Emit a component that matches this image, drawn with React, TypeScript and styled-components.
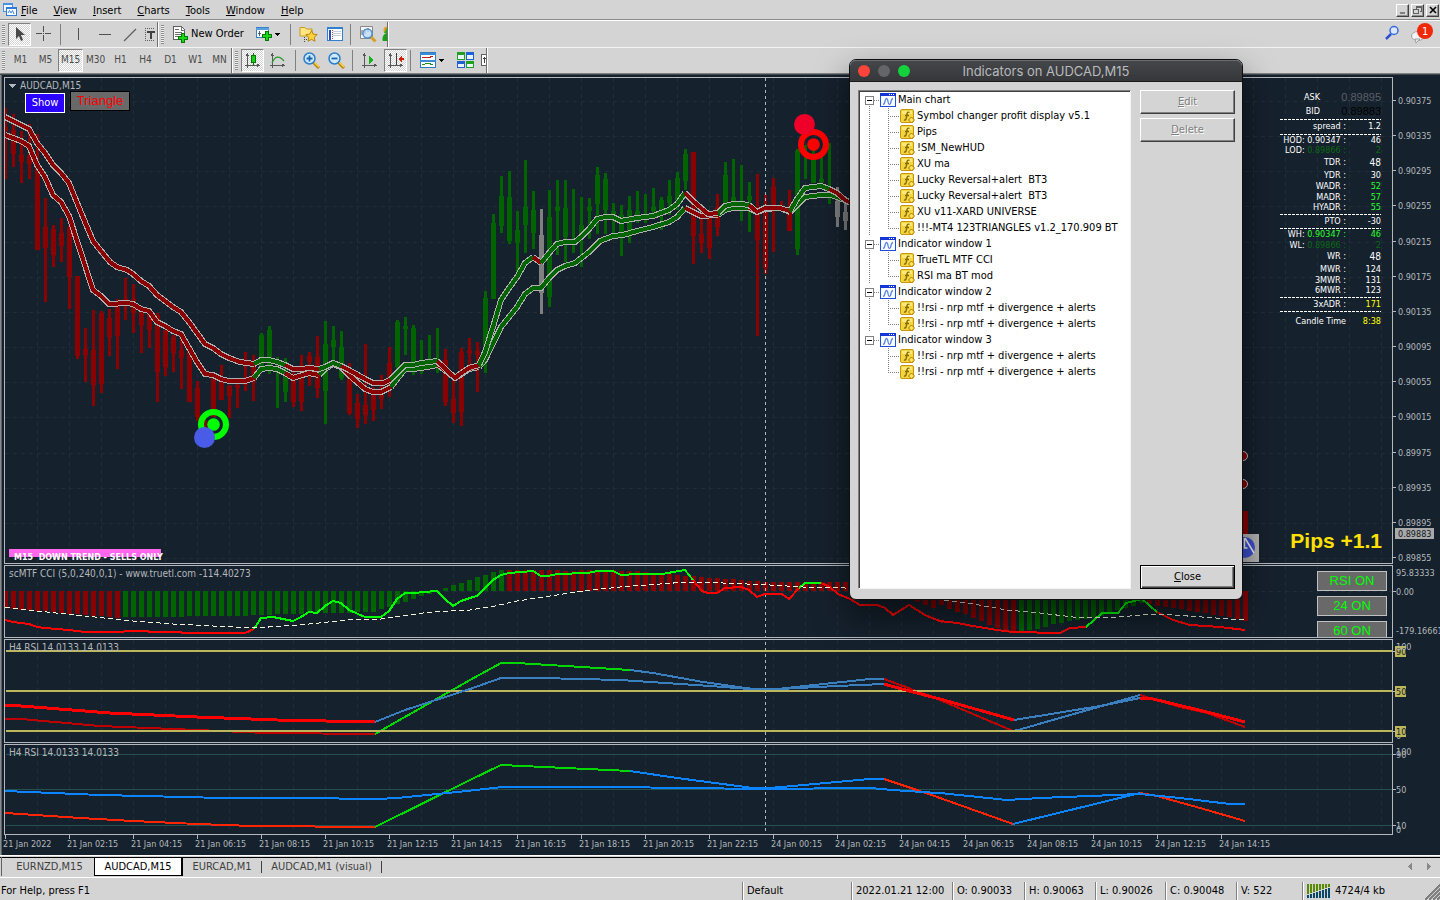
import React from 'react';
import styled, { createGlobalStyle, css } from 'styled-components';

const UI = '"DejaVu Sans Condensed", "DejaVu Sans", sans-serif';
const ARIAL = '"Liberation Sans", Arial, sans-serif';
const FACE = '#d4d4d4';
const INK = '#15212d';
const FRAME = '#b4b8bc';
const RED = '#8b0000';
const GREEN = '#006400';
const GREY = '#808080';
const LIME = '#00ff00';

const GlobalStyle = createGlobalStyle`
  *, *::before, *::after { box-sizing: border-box; }
  body { margin: 0; background: ${FACE}; font: 11px/14px ${UI}; color: #000; }
  button { font: inherit; color: inherit; padding: 0; margin: 0; border: 0; background: none; }
  svg { display: block; flex: none; }
`;

/* ---------- chart data ---------- */

type Pt = [number, number];
type Block = [number, number, Pt[]];
type Run = { color: string; width?: number; blocks: Block[] };

/* Points are stored in thirds of a pixel from the block's origin. */
const place = (blocks: Block[]) =>
  blocks
    .map(([ox, oy, pts]) => pts.map(([x, y]) => `${Math.round(ox + x / 3)},${Math.round(oy + y / 3)}`).join(' '))
    .join(' ');

type Candle = [string, number, number, number?, number?];

const candles: Candle[] = [
  ['r', 24, 236, 82, 92], ['r', 42, 200, 90, 162], ['r', 94, 248, 166, 186], ['r', 72, 237, 166, 192], ['r', 102, 450, 200, 450],
  ['r', 294, 605, 381, 443], ['r', 375, 500, 387, 465], ['r', 354, 486, 398, 438], ['r', 375, 627, 385, 532], ['r', 528, 777, 528, 768],
  ['r', 684, 846, 747, 766], ['r', 630, 917, 751, 855], ['r', 633, 879, 639, 851], ['r', 627, 768, 655, 711], ['r', 598, 807, 602, 708],
  ['r', 534, 660, 598, 612], ['r', 551, 699, 598, 640], ['r', 620, 759, 630, 675], ['r', 630, 744, 630, 689], ['r', 640, 906, 645, 817],
  ['r', 690, 828, 690, 800], ['r', 705, 816, 711, 760], ['r', 700, 867, 751, 773], ['r', 750, 906, 750, 906], ['r', 843, 964, 865, 950],
  ['r', 960, 1000], ['r', 825, 950, 835, 950], ['r', 795, 900, 835, 900], ['r', 855, 953, 858, 887], ['r', 850, 923, 855, 865],
  ['r', 756, 873, 840, 855], ['r', 765, 903, 795, 845], ['g', 699, 800, 705, 800], ['g', 678, 822, 689, 800], ['g', 771, 924],
  ['g', 774, 906, 785, 875], ['r', 800, 921, 840, 907], ['r', 765, 934, 795, 905], ['r', 756, 858, 768, 787], ['r', 708, 894, 771, 865],
  ['g', 663, 972, 732, 873], ['g', 678, 802, 720, 740], ['g', 693, 840, 740, 835], ['r', 790, 945, 810, 940], ['r', 882, 983, 910, 958],
  ['r', 732, 971, 915, 945], ['r', 860, 963, 883, 930], ['r', 825, 927, 860, 898], ['r', 741, 891, 790, 860], ['g', 660, 807, 666, 802],
  ['g', 651, 765, 678, 688], ['g', 675, 825, 684, 815], ['g', 720, 822], ['g', 705, 800], ['g', 684, 819],
  ['r', 747, 917, 780, 905], ['r', 820, 969, 897, 940], ['r', 744, 977, 755, 935], ['r', 714, 800, 750, 755], ['r', 726, 876, 753, 765],
  ['g', 573, 819, 594, 760], ['g', 342, 597, 370, 597], ['g', 228, 399, 288, 378], ['g', 213, 432, 290, 423], ['g', 333, 517, 390, 428],
  ['g', 180, 459, 321, 375], ['g', 273, 447, 330, 400], ['x', 327, 642, 405, 580], ['g', 270, 621, 350, 590], ['g', 240, 465, 321, 333],
  ['g', 240, 486, 325, 412], ['g', 267, 459], ['g', 291, 501, 375, 410], ['g', 294, 417, 321, 333], ['g', 201, 402, 225, 312],
  ['g', 219, 402, 237, 330], ['g', 309, 400, 333, 345], ['g', 315, 468, 345, 408], ['g', 288, 429, 330, 400], ['g', 273, 370, 333, 350],
  ['g', 282, 370], ['g', 264, 345, 321, 333], ['g', 291, 390, 300, 345], ['g', 240, 345, 288, 310], ['g', 216, 330, 234, 300],
  ['g', 147, 270, 162, 243], ['r', 156, 492, 156, 408], ['r', 330, 459, 402, 430], ['r', 345, 477, 350, 444], ['r', 282, 408, 321, 380],
  ['g', 186, 310, 225, 310], ['g', 177, 310, 290, 310], ['g', 195, 363], ['g', 246, 396, 288, 300], ['r', 222, 708, 330, 420],
  ['r', 285, 521, 315, 505], ['r', 234, 456, 262, 315], ['r', 303, 320], ['r', 270, 393, 318, 393], ['g', 147, 465, 153, 447],
  ['g', 135, 237], ['g', 150, 250, 170, 250], ['g', 165, 250, 236, 250], ['g', 129, 312], ['x', 261, 381, 303, 350], ['x', 300, 390, 336, 363],
];
const tone: Record<string, string> = { r: RED, g: GREEN, x: GREY };

const upperMA: Run[] = [
  { color: RED, blocks: [[0, 100, [[16, 50], [88, 88], [112, 130], [136, 160], [160, 195], [184, 218], [208, 250], [240, 330], [280, 423], [330, 485], [352, 500], [380, 510], [400, 522], [424, 543], [448, 558], [472, 585], [496, 602], [520, 622], [544, 637], [568, 665], [592, 700], [616, 732], [640, 743], [664, 762], [688, 773], [720, 785], [763, 791]]]] },
  { color: GREEN, blocks: [[0, 100, [[763, 791], [784, 780], [808, 780], [832, 786], [856, 795]]]] },
  { color: RED, blocks: [[0, 100, [[856, 795], [880, 807], [904, 807], [928, 803], [956, 808]]]] },
  { color: GREEN, blocks: [[0, 100, [[956, 808], [976, 800], [1000, 790], [1024, 797]]]] },
  { color: RED, blocks: [[0, 100, [[1024, 797], [1048, 810], [1096, 837], [1120, 848], [1150, 848], [1170, 840]]]] },
  { color: GREEN, blocks: [[0, 100, [[1170, 840], [1192, 820], [1216, 796], [1240, 795], [1264, 789], [1312, 782]]]] },
  { color: RED, blocks: [[0, 100, [[1312, 782], [1365, 833]]], [440, 100, [[60, 822], [88, 803], [117, 796]]]] },
  { color: GREEN, blocks: [[440, 100, [[117, 796], [136, 755], [160, 680], [184, 600], [208, 565], [232, 532], [256, 490], [280, 470]]]] },
  { color: RED, blocks: [[440, 100, [[280, 470], [304, 490]]]] },
  { color: GREEN, blocks: [[440, 100, [[304, 490], [328, 460], [352, 432], [376, 427], [404, 425], [424, 410], [448, 387], [472, 357], [496, 350], [520, 350], [544, 362], [592, 355], [640, 347], [688, 330], [712, 313], [736, 278]]]] },
  { color: RED, blocks: [[440, 100, [[736, 278], [760, 302], [784, 325], [804, 341], [834, 340]]]] },
  { color: GREEN, blocks: [[440, 100, [[834, 340], [856, 318], [880, 311], [904, 311], [928, 315]]]] },
  { color: RED, blocks: [[440, 100, [[928, 315], [952, 335], [976, 325], [1020, 323], [1050, 333]]]] },
  { color: GREEN, blocks: [[440, 100, [[1050, 333], [1072, 298], [1096, 263], [1144, 259], [1168, 266]]]] },
  { color: RED, blocks: [[440, 100, [[1168, 266], [1192, 280], [1216, 300], [1250, 318]]]] },
];
const lowerMA: Run[] = [
  { color: RED, blocks: [[0, 100, [[16, 105], [64, 124], [88, 138], [112, 195], [136, 232], [160, 285], [184, 306], [208, 348], [240, 450], [280, 570], [304, 588], [328, 611], [380, 608], [400, 613], [424, 628], [448, 632], [472, 665], [496, 678], [520, 692], [544, 703], [568, 745], [592, 787], [614, 822], [640, 826], [664, 838], [688, 843], [736, 843], [763, 835]]]] },
  { color: GREEN, blocks: [[0, 100, [[763, 835], [784, 808], [808, 804], [832, 808], [856, 820]]]] },
  { color: RED, blocks: [[0, 100, [[856, 820], [880, 835], [928, 818], [956, 824]]]] },
  { color: GREEN, blocks: [[0, 100, [[956, 824], [976, 808], [1000, 792], [1024, 800]]]] },
  { color: RED, blocks: [[0, 100, [[1024, 800], [1048, 825], [1096, 866], [1120, 875], [1144, 875], [1172, 860]]]] },
  { color: GREEN, blocks: [[0, 100, [[1172, 860], [1192, 838], [1216, 808], [1240, 806], [1280, 800], [1312, 796]]]] },
  { color: RED, blocks: [[0, 100, [[1312, 792], [1365, 835]]], [440, 100, [[60, 824], [88, 806], [117, 800]]]] },
  { color: GREEN, blocks: [[440, 100, [[117, 800], [136, 780], [184, 680], [232, 620], [256, 583], [280, 563], [304, 563], [328, 535], [352, 510], [376, 498], [404, 488], [448, 455], [480, 422], [520, 408], [548, 406], [592, 392], [640, 380], [688, 365], [712, 350], [736, 325]]]] },
  { color: RED, blocks: [[440, 100, [[736, 325], [784, 347], [834, 346]]]] },
  { color: GREEN, blocks: [[440, 100, [[834, 346], [856, 330], [880, 324], [928, 325]]]] },
  { color: RED, blocks: [[440, 100, [[928, 325], [952, 337], [976, 327], [1020, 325], [1050, 335]]]] },
  { color: GREEN, blocks: [[440, 100, [[1050, 335], [1096, 292], [1144, 284], [1172, 284], [1216, 300], [1250, 318]]]] },
];

/* CCI histogram: window y of each bar's far end, by bar index. */
const cciBars: { i: number; y: number; up: boolean }[] = [];
const addBars = (from: number, up: boolean, ys: number[]) => ys.forEach((y, k) => cciBars.push({ i: from + k, y, up }));
addBars(0, false, [608, 609, 610, 610, 611, 611, 612, 613, 614, 614, 615, 616, 616, 617, 618]);
addBars(15, true, [617, 617, 617, 617, 617, 617, 617, 617, 616, 616, 616, 616, 616, 616, 616, 616, 615, 615, 615, 614, 614, 614, 614, 613, 613, 613, 613, 613, 613, 612, 612, 612, 609, 607, 604, 602, 599, 596, 594, 592, 588, 585, 583, 580, 577, 575, 572, 570]);
addBars(63, false, [570, 570, 570, 570, 570, 570, 570, 571, 571, 570, 570, 570, 570, 570, 571, 571, 571, 572, 573, 573, 574, 575, 576, 576, 577, 578, 578, 579, 579, 580, 581, 581, 582, 582, 582, 582, 582, 582, 582, 582, 582, 582, 582, 582]);
addBars(114, false, [602, 605, 608, 605, 609, 612, 614, 618, 621, 625, 628, 630, 633]);
addBars(127, true, [632, 630, 629, 627, 624, 623, 621, 620, 619, 618, 616, 613, 610, 608, 606, 603]);
addBars(143, false, [604, 606, 607, 608, 609, 611, 612, 613, 615, 616, 617, 619, 621]);

const cciLine: Run[] = [
  { color: '#ff0000', blocks: [[0, 530, [[16, 270], [40, 275], [88, 282], [112, 290], [136, 293], [208, 300], [256, 306], [370, 306], [376, 302], [440, 302], [450, 306], [540, 306], [548, 309], [736, 309], [762, 298]]]] },
  { color: LIME, blocks: [[0, 530, [[762, 298], [784, 265], [820, 261], [880, 272], [904, 262], [928, 247], [952, 250], [976, 228], [1000, 213], [1024, 220], [1048, 240], [1096, 261], [1144, 261], [1168, 243], [1192, 207], [1216, 190], [1245, 190], [1270, 186], [1312, 184], [1336, 208], [1360, 228], [1384, 214], [1420, 202]]], [470, 560, [[20, 108], [45, 83], [69, 60], [93, 46], [118, 39], [190, 33], [212, 47], [235, 47], [260, 43], [350, 39], [385, 33], [430, 33], [452, 45], [500, 42], [575, 42], [645, 31], [668, 60]]]] },
  { color: '#ff0000', blocks: [[470, 560, [[668, 60], [695, 92], [715, 99], [740, 99], [766, 85], [813, 81], [838, 90], [862, 111], [886, 102], [935, 102], [958, 118], [987, 85]]]] },
  { color: LIME, blocks: [[470, 560, [[987, 85], [1005, 69], [1052, 69]]]] },
  { color: '#ff0000', blocks: [[470, 560, [[1052, 69], [1080, 80], [1105, 102], [1140, 118], [1170, 134], [1222, 135], [1245, 145], [1270, 166], [1317, 135], [1365, 165], [1415, 186]]], [940, 440, [[0, 543], [50, 550], [100, 558], [170, 570], [220, 576], [360, 579], [390, 563], [438, 560]]]] },
  { color: LIME, blocks: [[940, 440, [[438, 560], [485, 519], [535, 518], [557, 490], [605, 478], [650, 517]]]] },
  { color: '#ff0000', blocks: [[940, 440, [[650, 517], [700, 540], [750, 555], [840, 561], [916, 570]]]] },
];
const cciSignal: Block[] = [
  [0, 530, [[16, 232], [112, 242], [256, 259], [400, 272], [520, 281], [640, 288], [760, 293], [900, 286], [1040, 270], [1144, 268], [1270, 250], [1300, 246], [1400, 239]]],
  [470, 560, [[0, 149], [75, 138], [140, 123], [240, 107], [340, 93], [450, 80], [530, 74], [650, 65], [760, 70], [900, 76], [1000, 81], [1100, 82]]],
  [940, 440, [[30, 483], [100, 493], [200, 510], [300, 520], [400, 532], [500, 534], [640, 523], [700, 525], [916, 539]]],
];

const STEEL = '#3a80c0';
const DEEP = '#c00000';
const LEAF = '#00d800';
const rsiOneThin: Run[] = [
  { color: DEEP, blocks: [[0, 530, [[16, 566], [64, 567], [300, 588], [592, 600], [800, 608], [1124, 611]]]] },
  { color: LEAF, blocks: [[0, 530, [[1124, 611], [1410, 451]]], [470, 560, [[93, 309], [140, 309], [480, 330]]]] },
  { color: STEEL, blocks: [[470, 560, [[480, 330], [550, 340], [700, 365], [850, 386], [920, 386], [1200, 356], [1243, 356]]]] },
  { color: DEEP, blocks: [[470, 560, [[1243, 356], [1300, 378]]], [940, 440, [[0, 780], [220, 872]]]] },
  { color: STEEL, blocks: [[940, 440, [[220, 872], [235, 870], [600, 764]]]] },
  { color: DEEP, blocks: [[940, 440, [[600, 764], [720, 800], [800, 820], [916, 861]]]] },
];
const rsiOneThick: Run[] = [
  { color: '#ff0000', width: 3, blocks: [[0, 530, [[16, 525], [64, 528], [330, 550], [592, 561], [830, 571], [1124, 575]]]] },
  { color: STEEL, blocks: [[0, 530, [[1124, 575], [1216, 540], [1410, 478]]], [470, 560, [[93, 353], [210, 354], [450, 360], [720, 377], [840, 387], [930, 387], [1100, 378], [1243, 372]]]] },
  { color: '#ff0000', width: 3, blocks: [[470, 560, [[1243, 372], [1330, 397]]], [940, 440, [[0, 777], [222, 840]]]] },
  { color: STEEL, blocks: [[940, 440, [[222, 840], [480, 797], [600, 775]]]] },
  { color: '#ff0000', width: 3, blocks: [[940, 440, [[600, 775], [640, 778], [800, 815], [916, 847]]]] },
];
const AZURE = '#0a84ff';
const FLAME = '#ff2400';
const rsiTwo: Run[] = [
  { color: FLAME, blocks: [[0, 530, [[16, 848], [240, 863], [400, 874], [592, 883], [760, 888], [1124, 891]]]] },
  { color: LEAF, blocks: [[0, 530, [[1124, 891], [1410, 750]]], [470, 560, [[93, 615], [480, 633]]]] },
  { color: AZURE, blocks: [[470, 560, [[480, 633], [620, 655], [850, 684], [900, 684], [1200, 657], [1243, 656]]]] },
  { color: FLAME, blocks: [[470, 560, [[1243, 656], [1340, 690]]], [940, 440, [[0, 1075], [218, 1153]]]] },
  { color: AZURE, blocks: [[940, 440, [[218, 1153], [600, 1058]]]] },
  { color: FLAME, blocks: [[940, 440, [[600, 1058], [650, 1068], [780, 1103], [916, 1143]]]] },
  { color: AZURE, blocks: [[0, 530, [[16, 783], [160, 788], [300, 794], [430, 797], [670, 803], [900, 805], [1130, 806], [1190, 803], [1310, 792], [1400, 782]]], [470, 560, [[95, 681], [430, 681], [650, 685], [870, 686], [1200, 683], [1270, 689], [1400, 700]]], [940, 440, [[0, 1060], [200, 1079], [300, 1074], [600, 1062], [720, 1073], [870, 1091], [916, 1092]]]] },
];

const prices = ['0.90375', '0.90335', '0.90295', '0.90255', '0.90215', '0.90175', '0.90135', '0.90095', '0.90055', '0.90015', '0.89975', '0.89935', '0.89895', '0.89855'];
const priceY = (n: number) => Math.round(23 + n * 35.15);
const times = ['21 Jan 2022', '21 Jan 02:15', '21 Jan 04:15', '21 Jan 06:15', '21 Jan 08:15', '21 Jan 10:15', '21 Jan 12:15', '21 Jan 14:15', '21 Jan 16:15', '21 Jan 18:15', '21 Jan 20:15', '21 Jan 22:15', '24 Jan 00:15', '24 Jan 02:15', '24 Jan 04:15', '24 Jan 06:15', '24 Jan 08:15', '24 Jan 10:15', '24 Jan 12:15', '24 Jan 14:15'];

/* ---------- page frame ---------- */

const Page = styled.div`
  display: flex; flex-direction: column; min-height: 100vh; position: relative; background: ${FACE}; overflow: hidden;
`;
const MenuBar = styled.nav`
  display: flex; align-items: center; height: 21px; padding: 1px 1px 1px 2px; border-bottom: 1px solid #fff; box-shadow: inset 0 -1px #8a8a8a;
`;
const MenuItem = styled.button`
  padding: 2px 8px 0; height: 18px;
  &:first-of-type { padding-left: 4px; }
`;
const Spacer = styled.div` flex: 1; `;
const Caption = styled.button`
  width: 13px; height: 13px; margin-left: 2px; display: grid; place-items: center; background: ${FACE};
  border: 1px solid; border-color: #fff #404040 #404040 #fff; box-shadow: inset -1px -1px #909090;
`;
const ToolRow = styled.div<{ $last?: boolean }>`
  display: flex; align-items: stretch; height: ${(p) => (p.$last ? 26 : 27)}px; padding-top: ${(p) => (p.$last ? 0 : 1)}px;
  border-bottom: 1px solid ${(p) => (p.$last ? '#808080' : '#f4f4f4')};
`;
const Band = styled.div`
  display: flex; align-items: center; padding-left: 2px; padding-bottom: 1px; border-right: 1px solid #707070; box-shadow: 1px 0 #fff; margin-right: 1px; overflow: hidden;
`;
const Grip = styled.i`
  width: 3px; height: 19px; margin-right: 3px; flex: none;
  background: repeating-linear-gradient(#8c8c8c 0 1px, #f0f0f0 1px 2px);
`;
const Tool = styled.button<{ $w?: number; $on?: boolean }>`
  flex: none; width: ${(p) => p.$w ?? 25}px; height: 23px; display: flex; align-items: center; justify-content: center; gap: 2px; white-space: nowrap;
  ${(p) => p.$on && css`
    background: repeating-conic-gradient(#fff 0 25%, ${FACE} 0 50%) 0 0 / 2px 2px;
    border: 1px solid; border-color: #808080 #fff #fff #808080;
  `}
`;
const Period = styled(Tool)` color: #4a4a4a; font-size: 10px; `;
const Rule = styled.i`
  width: 1px; height: 21px; margin: 0 3px; background: #808080; flex: none;
`;
const Alerts = styled.div` display: flex; gap: 10px; align-items: center; padding: 0 6px 3px 0; `;

const Workspace = styled.main`
  flex: 1; display: grid; grid-template-columns: minmax(0, 1fr) 47px; grid-template-rows: minmax(487px, 1fr) 73px 104px 91px 19px;
  row-gap: 1px; padding: 2px 0 0 4px; background: ${INK}; border-top: 1px solid #40474e;
  box-shadow: inset 1px 0 #8a8a8a, inset 2px 0 #5a6068;
`;
const Pane = styled.section`
  position: relative; overflow: hidden; border: 1px solid ${FRAME}; min-width: 0;
`;
const Plot = styled.svg` width: 100%; height: 100%; `;
const Scale = styled.svg` width: 47px; height: 100%; overflow: hidden; `;
const PaneTitle = styled.div`
  position: absolute; left: 4px; top: 2px; color: ${FRAME}; font-size: 10px; line-height: 12px; display: flex; align-items: center; gap: 3px;
`;
const TimeAxis = styled.div`
  grid-column: 1 / -1; display: flex; overflow: hidden; color: ${FRAME}; font-size: 9px; line-height: 19px; white-space: nowrap;
  margin-top: -1px; margin-left: -1px;
`;
const TimeCell = styled.span`
  flex: none; width: 64px; background: linear-gradient(${FRAME}, ${FRAME}) 2px 0 / 1px 4px no-repeat;
`;
const ChartButtons = styled.div` position: absolute; left: 20px; top: 13px; display: flex; gap: 5px; align-items: flex-start; `;
const ChartButton = styled.button<{ $kind: 'show' | 'triangle' | 'toggle' }>`
  height: 20px; display: grid; place-items: center;
  ${(p) => p.$kind === 'show' && css`width: 40px; margin-top: 2px; height: 20px; background: #2a00ff; border: 1px solid #fff; color: #fff;`}
  ${(p) => p.$kind === 'triangle' && css`width: 60px; background: #696969; border: 1px solid #000; color: #f00; font: 13px/18px ${ARIAL};`}
  ${(p) => p.$kind === 'toggle' && css`width: 70px; background: #696969; border: 1px solid #c0c0c0; color: ${LIME}; font: 13px/18px ${ARIAL};`}
`;
const Toggles = styled.div` position: absolute; right: 5px; top: 5px; display: grid; gap: 5px; `;
const Hud = styled.div`
  position: absolute; right: 11px; top: 12px; width: 101px; color: #fff; font-size: 9px;
`;
const HudRow = styled.div<{ $h: number; $rule?: boolean; $quote?: boolean }>`
  display: grid; grid-template-columns: ${(p) => (p.$quote ? 40 : 66)}px 1fr; height: ${(p) => p.$h}px; line-height: ${(p) => p.$h}px; text-align: right; white-space: nowrap;
  ${(p) => p.$rule && css`background: repeating-linear-gradient(90deg, #fff 0 3px, transparent 3px 4px) 0 1px / 100% 1px no-repeat;`}
`;
const HudText = styled.span<{ $color?: string; $size?: number; $quote?: boolean }>`
  color: ${(p) => p.$color ?? '#fff'}; font-size: ${(p) => p.$size ?? 9}px;
  ${(p) => p.$quote && css`font-family: ${ARIAL};`}
`;
const Pips = styled.div`
  position: absolute; right: 10px; bottom: 9px; color: #ffe000; font: bold 21px/26px ${ARIAL};
`;
const Trend = styled.div`
  position: absolute; left: 4px; bottom: 0; width: 160px; height: 14px; background: linear-gradient(#ff66ee, #ff66ee) 0 0 / 152px 8px no-repeat;
  padding: 4px 0 0 5px; color: #fff; font: 900 8px/9px "DejaVu Sans", sans-serif; white-space: pre;
`;

const Tabs = styled.div`
  display: flex; align-items: stretch; height: 23px; border-top: 1px solid #fff; border-bottom: 1px solid #fff; color: #404040;
  box-shadow: inset 0 1px ${FACE}, inset 0 2px #000; padding: 1px 0 1px 1px;
`;
const Tab = styled.button<{ $on?: boolean; $w: number }>`
  width: ${(p) => p.$w}px; flex: none;
  &:first-child { border-left: 1px solid #606060; padding-left: 3px; }
  ${(p) => p.$on && css`background: #fff; color: #000; border: 1px solid #000; border-width: 1px 2px 1px 1px;`}
`;
const TabRule = styled.i` width: 1px; margin: 4px 0 3px; background: #404040; `;
const TabArrows = styled.div` display: flex; align-items: center; gap: 14px; margin-left: auto; padding-right: 8px; `;
const Status = styled.footer`
  display: flex; align-items: center; height: 22px; padding-top: 3px; white-space: nowrap; overflow: hidden;
`;
const StatusCell = styled.span<{ $w?: number }>`
  ${(p) => (p.$w ? css`flex: none; width: ${p.$w}px; border-left: 1px solid #808080; box-shadow: inset 1px 0 #fff; padding-left: 4px;` : css`flex: 1; padding-left: 1px;`)}
  height: 18px; display: flex; align-items: center; gap: 4px;
`;

/* ---------- dialog ---------- */

const Dialog = styled.div`
  position: absolute; left: 849px; top: 59px; width: 394px; height: 541px; border: 1px solid #101010; border-radius: 7px; background: ${FACE};
  box-shadow: 0 16px 34px rgba(0, 0, 0, 0.55); display: flex; flex-direction: column;
`;
const TitleBar = styled.header`
  height: 22px; position: relative; display: grid; place-items: center; border-radius: 6px 6px 0 0; border-bottom: 1px solid #1a1a1a;
  background: linear-gradient(#45474b, #35373a); color: #b9babc; font: 13px/20px Inter, sans-serif; box-shadow: inset 0 1px #6a6c6f;
`;
const Lights = styled.div` position: absolute; left: 8px; top: 5px; display: flex; gap: 8px; `;
const Light = styled.button<{ $c: string }>` width: 12px; height: 12px; border-radius: 50%; background: ${(p) => p.$c}; `;
const DialogBody = styled.div` flex: 1; display: flex; gap: 9px; padding: 8px 7px 10px 8px; min-height: 0; `;
const Tree = styled.ul`
  flex: 1; margin: 0; padding: 1px 0 0 4px; list-style: none; background: #fff; border: 1px solid; border-color: #808080 #f4f4f4 #f4f4f4 #808080;
  box-shadow: inset 1px 1px #404040;
`;
const dots = (dir: string) => `repeating-linear-gradient(${dir}, #808080 0 1px, transparent 1px 2px)`;
const Branch = styled.li`
  background: ${dots('180deg')} 6px 8px / 1px 100% no-repeat;
  &:last-child { background: none; }
`;
const Leaves = styled.ul` margin: 0; padding: 0; list-style: none; `;
const Leaf = styled.li`
  height: 16px; display: flex; align-items: center; gap: 1px; padding-left: 37px; white-space: pre;
  background: ${dots('180deg')} 25px 0 / 1px 16px no-repeat, ${dots('90deg')} 25px 8px / 12px 1px no-repeat;
  &:last-child { background: ${dots('180deg')} 25px 0 / 1px 8px no-repeat, ${dots('90deg')} 25px 8px / 12px 1px no-repeat; }
`;
const BranchRow = styled.div` height: 16px; display: flex; align-items: center; gap: 2px; padding-left: 2px; `;
const Expander = styled.button`
  width: 9px; height: 9px; border: 1px solid #808080; background: linear-gradient(#000, #000) 1px 3px / 5px 1px no-repeat #fff;
`;
const Link = styled.i` width: 6px; height: 1px; background: ${dots('90deg')}; margin: 0 -2px; `;
const Actions = styled.div` display: flex; flex-direction: column; gap: 4px; width: 95px; `;
const Action = styled.button<{ $primary?: boolean }>`
  height: 24px; border: 1px solid; border-color: #fff #404040 #404040 #fff; box-shadow: inset -1px -1px #808080;
  &:disabled { color: #808080; text-shadow: 1px 1px #fff; }
  ${(p) => p.$primary && css`margin-top: auto; border: 1px solid #000; box-shadow: inset 1px 1px #fff, inset -1px -1px #404040, inset -2px -2px #808080;`}
`;

/* ---------- icons ---------- */

const Ico = ({ children, w = 16, h = 16, crisp = true }: { children: React.ReactNode; w?: number; h?: number; crisp?: boolean }) => (
  <svg width={w} height={h} viewBox={`0 0 ${w} ${h}`} fill="none" shapeRendering={crisp ? 'crispEdges' : 'auto'} aria-hidden="true">{children}</svg>
);
const Arrow = () => <Ico w={6} h={3}><path d="M0 0h5L2.500 3z" fill="#000" /></Ico>;
const PlusGreen = ({ x, y }: { x: number; y: number }) => (
  <path transform={`translate(${x} ${y})`} d="M3.500 .5h3v3h3v3h-3v3h-3v-3h-3v-3h3z" fill="#19d819" stroke="#067806" />
);
const Axes = () => <path d="M2.500 2v14M0 13.500h14M1 4l1.500-2L4 4M12 12l2 1.500-2 1.500" stroke="#585858" />;
const Lens = ({ plus }: { plus?: boolean }) => (
  <Ico w={17} h={17} crisp={false}>
    <path d="M10 10l6 6" stroke="#b8860b" strokeWidth="3" /><path d="M10.500 9.500l5.500 5.500" stroke="#ffd34a" strokeWidth="1.400" />
    <circle cx="6.500" cy="6.500" r="5.500" fill="#cfeafc" stroke="#2d7fc8" strokeWidth="1.500" />
    <path d={plus ? 'M6.500 3.500v6M3.500 6.500h6' : 'M3.500 6.500h6'} stroke="#1866b0" strokeWidth="1.800" />
  </Ico>
);
const ChartIcon = () => (
  <Ico>
    <rect x=".5" y="1.500" width="15" height="13" fill="#fff" stroke="#1c4fd8" /><rect x="0" y="1" width="16" height="3" fill="#1634d6" />
    <path d="M9 2.500h1M11 2.500h1M13 2.500h1" stroke="#fff" />
    <path d="M3 12.500c2.500 0 1.500-6 3.500-6s1 6 3 6 1-6 3.500-6" stroke="#5a86e8" strokeWidth="1.300" shapeRendering="auto" />
  </Ico>
);
const FxIcon = () => (
  <Ico crisp={false}>
    <rect x=".5" y="1.500" width="13" height="13" rx="1.500" fill="#f2d640" stroke="#c8960a" /><path d="M2 3h10v3H2z" fill="#f9e97c" />
    <path d="M9.500 4.500C8 3.500 7.300 4.500 7 6l-.8 4.500c-.3 1.500-.9 1.800-2.200 1.300M5 7.500h4" stroke="#8a6a00" strokeWidth="1.400" />
    <path d="M11.500 9l3 3-3 3-3-3z" fill="#ffe25a" stroke="#a87c00" />
  </Ico>
);

/* ---------- plots ---------- */

const Grid = ({ top, rows }: { top: number; rows?: number[] }) => (
  <g stroke="#1f2d39" strokeDasharray="4 4" shapeRendering="crispEdges">
    {Array.from({ length: 60 }, (_, n) => <line key={n} x1={37.5 + n * 32} x2={37.5 + n * 32} y1={top} y2={top + 1200} />)}
    {rows?.map((y) => <line key={y} x1={5} x2="200%" y1={y + 0.5} y2={y + 0.5} />)}
  </g>
);
const Lines = ({ runs, width = 2 }: { runs: Run[]; width?: number }) => (
  <g fill="none" strokeLinejoin="round" shapeRendering="crispEdges">
    {runs.map((r, n) => <polyline key={n} points={place(r.blocks)} stroke={r.color} strokeWidth={r.width ?? width} />)}
  </g>
);
const Ribbon = ({ runs }: { runs: Run[] }) => (
  <>
    <g stroke="#b0b0b0" strokeWidth="6" fill="none" strokeLinejoin="round" shapeRendering="crispEdges">
      {runs.map((r, n) => <polyline key={n} points={place(r.blocks)} />)}
    </g>
    <Lines runs={runs} width={4} />
  </>
);
const DayLine = () => <line x1="765.5" x2="765.5" y1="0" y2="1600" stroke="#b4b8bc" strokeDasharray="3 3" shapeRendering="crispEdges" />;

const Candles = () => (
  <g shapeRendering="crispEdges">
    {candles.map(([t, hi, lo, a, b], i) => {
      const y = (v: number) => Math.round(100 + v / 3);
      const x = 4 + 8 * i;
      return (
        <g key={i} fill={tone[t]}>
          <rect x={x} y={y(hi)} width="3" height={y(lo) - y(hi)} />
          {a !== undefined && b !== undefined && <rect x={x - 1} y={y(a)} width="5" height={Math.max(3, y(b) - y(a))} />}
        </g>
      );
    })}
  </g>
);

const Target = ({ x, y, color }: { x: number; y: number; color: string }) => (
  <g><circle cx={x} cy={y} r="12.500" stroke={color} strokeWidth="6" fill="none" /><circle cx={x} cy={y} r="6.300" fill={color} /></g>
);

const MainPlot = () => (
  <Plot aria-label="AUDCAD M15 price chart">
    <g transform="translate(-5 -78)">
      <Grid top={78} rows={prices.map((_, n) => priceY(n) + 78)} />
      <Candles />
      <DayLine />
      <Ribbon runs={lowerMA} />
      <Ribbon runs={upperMA} />
      <Target x={213.5} y={424.5} color={LIME} />
      <circle cx="204.500" cy="437.500" r="10.500" fill="#4a5be8" />
      <Target x={813.5} y={144.5} color="#ff0000" />
      <circle cx="804.500" cy="124.500" r="10.500" fill="#ee0028" />
      <g stroke="#c8c8c8" fill={RED}><circle cx="1243" cy="456" r="4.500" /><circle cx="1243" cy="484" r="4.500" /></g>
      <path d="M1243 511h5v24h-5z" fill={RED} />
      <rect x="1231" y="534" width="28" height="28" fill="#b4b4b4" />
      <circle cx="1244.500" cy="547.500" r="10.500" fill="#3c50d0" />
      <path d="M1244.500 538v10h3M1245 538l9 15" stroke="#f0f0f0" strokeWidth="1.500" fill="none" />
    </g>
  </Plot>
);
const CciPlot = () => (
  <Plot aria-label="CCI">
    <g transform="translate(-5 -566)">
      <Grid top={566} rows={[591]} />
      <g shapeRendering="crispEdges">
        {cciBars.map(({ i, y, up }) => (
          <rect key={i} x={3 + 8 * i} width="5" y={Math.min(y, 591)} height={Math.max(1, Math.abs(591 - y))} fill={up ? GREEN : RED} />
        ))}
      </g>
      <DayLine />
      <Lines runs={cciLine} />
      <polyline points={place(cciSignal)} fill="none" stroke="#f4f4dc" strokeDasharray="5 3" shapeRendering="crispEdges" />
    </g>
  </Plot>
);
const LevelPlot = ({ top, under, over, levels, color, width, label }: { top: number; under: Run[]; over: Run[]; levels: number[]; color: string; width: number; label: string }) => (
  <Plot aria-label={label}>
    <g transform={`translate(-5 ${-top})`}>
      <Grid top={top} />
      <DayLine />
      <Lines runs={under} />
      {levels.map((y) => <line key={y} x1="6" x2="200%" y1={y} y2={y} stroke={color} strokeWidth={width} shapeRendering="crispEdges" />)}
      <Lines runs={over} />
    </g>
  </Plot>
);

const Tick = ({ y, children, x = 5, box, mark = true, ink = FRAME }: { y: number; children: string; x?: number; box?: string; mark?: boolean; ink?: string }) => (
  <g>
    {mark && <path d={`M0 ${y + 0.5}h3`} stroke={FRAME} />}
    {box && <rect x="2" y={y - 5} width={children.length > 3 ? 39 : 11} height="11" fill={box} />}
    <text x={x} y={y + 4} fontSize="9" fontFamily={UI} fill={ink}>{children}</text>
  </g>
);

/* ---------- content ---------- */

type HudLine = { h: number; label?: string; value?: string; lc?: string; vc?: string; big?: boolean; quote?: boolean; mid?: string };
const hudRows: HudLine[] = [
  { h: 14, label: 'ASK', value: '0.89895', vc: '#5c6066', quote: true },
  { h: 14, label: 'BID', value: '0.89883', vc: '#000', quote: true },
  { h: 2 }, { h: 13, label: 'spread :', value: '1.2' }, { h: 2 },
  { h: 10, label: 'HOD: 0.90347 :', value: '46' },
  { h: 11, label: 'LOD:', mid: '0.89866 :', value: '2', lc: '#0a6a12', vc: '#0a6a12' },
  { h: 13, label: 'TDR :', value: '48', big: true }, { h: 12, label: 'YDR :', value: '30' },
  { h: 11, label: 'WADR :', value: '52', vc: '#2aff2a' }, { h: 10, label: 'MADR :', value: '57', vc: '#2aff2a' }, { h: 11, label: 'HYADR :', value: '55', vc: '#2aff2a' },
  { h: 3 }, { h: 11, label: 'PTO :', value: '-30' }, { h: 2 },
  { h: 11, label: 'WH:', mid: '0.90347 :', value: '46', lc: '#2aff2a', vc: '#2aff2a' },
  { h: 10, label: 'WL:', mid: '0.89866 :', value: '2', lc: '#0a6a12', vc: '#0a6a12' },
  { h: 13, label: 'WR :', value: '48', big: true }, { h: 12, label: 'MWR :', value: '124' }, { h: 10, label: '3MWR :', value: '131' }, { h: 11, label: '6MWR :', value: '123' },
  { h: 2 }, { h: 12, label: '3xADR :', value: '171', vc: '#ffff00' }, { h: 2 },
  { h: 18, label: 'Candle Time', value: '8:38', vc: '#ffff00' },
];
const tree: [string, string[]][] = [
  ['Main chart', ['Symbol changer profit display v5.1', 'Pips', '!SM_NewHUD', 'XU ma', 'Lucky Reversal+alert  BT3', 'Lucky Reversal+alert  BT3', 'XU v11-XARD UNIVERSE', '!!!-MT4 123TRIANGLES v1.2_170.909 BT']],
  ['Indicator window 1', ['TrueTL MTF CCI', 'RSI ma BT mod']],
  ['Indicator window 2', ['!!rsi - nrp mtf + divergence + alerts', '!!rsi - nrp mtf + divergence + alerts']],
  ['Indicator window 3', ['!!rsi - nrp mtf + divergence + alerts', '!!rsi - nrp mtf + divergence + alerts']],
];

export default function App() {
  return (
    <Page>
      <GlobalStyle />
      <MenuBar>
        <Ico w={15}>
          <rect x="1.500" y="1.500" width="9" height="8" fill="#eef6ff" stroke="#4a90e0" /><path d="M1 2.500h10" stroke="#4a90e0" />
          <rect x="4.500" y="5.500" width="10" height="8" fill="#fff" stroke="#2f7ad8" /><path d="M4 6.500h11" stroke="#2f7ad8" />
          <path d="M6 11l1.500-2.500L9 11l1.500-2.500L12 12" stroke="#3a86e0" shapeRendering="auto" />
        </Ico>
        {['File', 'View', 'Insert', 'Charts', 'Tools', 'Window', 'Help'].map((m) => <MenuItem key={m}><u>{m[0]}</u>{m.slice(1)}</MenuItem>)}
        <Spacer />
        <Caption aria-label="Minimize"><Ico w={8} h={8}><path d="M1 7h5" stroke="#808080" strokeWidth="2" /></Ico></Caption>
        <Caption aria-label="Restore"><Ico w={9} h={8}><path d="M3 .5h5.500V5H7M.5 3.500h5v4h-5zM3 1.500h6M3.500 1v2" stroke="#606060" /></Ico></Caption>
        <Caption aria-label="Close window"><Ico w={8} h={8} crisp={false}><path d="M1 1l6 6M7 1L1 7" stroke="#000" strokeWidth="1.600" /></Ico></Caption>
      </MenuBar>

      <ToolRow>
        <Band>
          <Grip />
          <Tool $on $w={23} aria-label="Cursor"><Ico><path d="M4 1v12l3-3 2 5 2-1-2-5h4z" fill="#484848" shapeRendering="auto" /></Ico></Tool>
          <Tool $w={26} aria-label="Crosshair"><Ico><path d="M7.500 0v6M7.500 9v6M0 7.500h6M9 7.500h6M7 7.500h1" stroke="#505050" /></Ico></Tool>
          <Rule />
          <Tool $w={28} aria-label="Vertical line"><Ico><path d="M8.500 2v12" stroke="#505050" /></Ico></Tool>
          <Tool aria-label="Horizontal line"><Ico><path d="M2 8.500h12" stroke="#505050" /></Ico></Tool>
          <Tool aria-label="Trend line"><Ico crisp={false}><path d="M2 15L14 3" stroke="#606060" strokeWidth="1.200" /></Ico></Tool>
          <Tool $w={15} aria-label="Text"><Ico w={11}><path d="M.5 2h11M.5 14.500h11M1.500 2v13" stroke="#606060" strokeDasharray="1 1" /><path d="M3 5.500h8M7 5v8" stroke="#404040" strokeWidth="2" /></Ico></Tool>
        </Band>
        <Band>
          <Grip />
          <Tool $w={82} aria-label="New Order">
            <Ico w={17} h={18}>
              <path d="M1.500 1.500h8l3 3v10h-11z" fill="#fff" stroke="#606060" /><path d="M9.500 1v4h3M3 4.500h4M3 7.500h7M3 9.500h7M3 11.500h4" stroke="#707070" />
              <PlusGreen x={6} y={8} />
            </Ico>
            New Order
          </Tool>
          <Tool $w={38} aria-label="New chart">
            <Ico w={18} h={16}><rect x="1.500" y="1.500" width="12" height="10" fill="#fff" stroke="#3880c8" /><path d="M1 3h13" stroke="#5aa0e0" strokeWidth="2" /><path d="M4.500 5v5M3 7.500h3" stroke="#506070" /><PlusGreen x={7} y={5} /></Ico>
            <Arrow />
          </Tool>
          <Rule />
          <Tool $w={28} aria-label="Profiles">
            <Ico w={19} h={18} crisp={false}><path d="M1 2.500h5l1.500 1.500H13v7H1z" fill="#ffe680" stroke="#c89a20" /><path d="M5.500 12v5M5 14.500h3" stroke="#444" strokeDasharray="1 1" /><path d="M12.500 5.500l1.700 3.600 4 .5-3 2.700.8 4-3.500-2-3.500 2 .8-4-3-2.700 4-.5z" fill="#ffd23c" stroke="#b8860b" /></Ico>
          </Tool>
          <Tool aria-label="Market watch">
            <Ico><rect x=".5" y="1.500" width="15" height="13" fill="#fff" stroke="#2f80d0" /><path d="M0 2h16" stroke="#2f80d0" strokeWidth="2" /><path d="M2.500 4v10" stroke="#2050c0" strokeWidth="2" /><path d="M6 5.500h8M6 7.500h8M6 9.500h8" stroke="#c0d0e0" /><path d="M5 4v9" stroke="#d04040" strokeDasharray="1 1" /></Ico>
          </Tool>
          <Rule />
          <Tool $w={28} aria-label="Strategy tester">
            <Ico w={18} h={18} crisp={false}><path d="M1.500 1.500h12v12h-12z" fill="#f6f6f6" stroke="#888" /><path d="M3 10V5m3 4V4m3 3V3" stroke="#606870" /><path d="M11.500 11.500l5 5" stroke="#d8a020" strokeWidth="3" /><circle cx="8.500" cy="8.500" r="4.500" fill="#b8d8f4bb" stroke="#4a90d0" strokeWidth="1.400" /></Ico>
          </Tool>
          <Ico w={5} h={18} crisp={false}><circle cx="5" cy="5" r="3.500" fill="#e0a020" /><path d="M5 8C0 9 0 15 1 16h4z" fill="#18a018" /><path d="M5 3L2 8h3z" fill="#18b018" /></Ico>
        </Band>
        <Spacer />
        <Alerts>
          <Ico crisp={false}><circle cx="10" cy="5.500" r="4" fill="#dce8ff" stroke="#3c6ae0" strokeWidth="1.500" /><path d="M7 9l-5 5" stroke="#2c50d0" strokeWidth="2.500" /></Ico>
          <Ico w={24} h={22} crisp={false}><ellipse cx="8" cy="14" rx="6.500" ry="4.500" fill="#f4f4f4" stroke="#a0a0a0" /><path d="M5 17l1 4 4-4z" fill="#e8e8e8" stroke="#a0a0a0" /><circle cx="15" cy="9" r="8" fill="#f02808" /><text x="12" y="13" fontSize="11" fontFamily={UI} fill="#fff">1</text></Ico>
        </Alerts>
      </ToolRow>

      <ToolRow $last>
        <Band>
          <Grip />
          {['M1', 'M5', 'M15', 'M30', 'H1', 'H4', 'D1', 'W1', 'MN'].map((p) => <Period key={p} $on={p === 'M15'} $w={p === 'MN' ? 23 : 25}>{p}</Period>)}
        </Band>
        <Band>
          <Grip />
          <Tool $on $w={23} aria-label="Candlesticks"><Ico><Axes /><path d="M8.500 1v12" stroke="#0a7a0a" /><rect x="6.500" y="3.500" width="4" height="7" fill="#18d018" stroke="#067806" /></Ico></Tool>
          <Tool $w={28} aria-label="Line chart"><Ico><Axes /><path d="M2 11c3-7 7-8 12-2" stroke="#2a9a2a" strokeWidth="1.300" shapeRendering="auto" /></Ico></Tool>
          <Rule />
          <Tool aria-label="Zoom in"><Lens plus /></Tool>
          <Tool aria-label="Zoom out"><Lens /></Tool>
          <Rule />
          <Tool $w={28} aria-label="Auto scroll"><Ico><Axes /><path d="M7 4l5 4-5 4z" fill="#18b018" /></Ico></Tool>
          <Tool $on $w={23} aria-label="Chart shift"><Ico><Axes /><path d="M8.500 1v12" stroke="#404040" /><path d="M10 7l4-3v2h2v2h-2v2z" fill="#d02000" /></Ico></Tool>
          <Rule />
          <Tool $w={36} aria-label="Indicators">
            <Ico w={17}><rect x=".5" y=".5" width="15" height="15" fill="#fff" stroke="#2f7cc4" /><path d="M0 2h16M0 8.500h16" stroke="#3c8cd4" strokeWidth="2" /><path d="M2 6l3-1 3 1 5-2" stroke="#c02020" /><path d="M2 13l3-1 3-1 5 2" stroke="#209020" /></Ico>
            <Arrow />
          </Tool>
          <Tool $w={30} aria-label="Templates">
            <Ico w={17}><path d="M0 0h8v8H0zM9 9h8v7H9z" fill="#20a020" /><path d="M9 0h8v8H9zM0 9h8v7H0z" fill="#2060d0" /><path d="M1 3h6v4H1zM10 3h6v4h-6zM1 12h6v3H1zM10 12h6v3h-6z" fill="#e8f4ff" /></Ico>
          </Tool>
          <Ico w={6}><path d="M1.500 2.500h8v11h-8z" fill="#fff" stroke="#606060" /><path d="M3 6h3M4.500 5v6" stroke="#404040" /></Ico>
        </Band>
      </ToolRow>

      <Workspace>
        <Pane>
          <MainPlot />
          <PaneTitle><Ico w={8} h={4}><path d="M0 0h7L3.500 4z" fill={FRAME} /></Ico>AUDCAD,M15</PaneTitle>
          <ChartButtons>
            <ChartButton $kind="show">Show</ChartButton>
            <ChartButton $kind="triangle">Triangle</ChartButton>
          </ChartButtons>
          <Trend>M15  DOWN TREND - SELLS ONLY</Trend>
          <Hud>
            {hudRows.map((r, n) => (
              <HudRow key={n} $h={r.h} $rule={!r.label} $quote={r.quote}>
                {r.label && (
                  <>
                    <HudText $color={r.mid ? '#fff' : r.lc}>{r.label}{r.mid && <HudText $color={r.lc}> {r.mid}</HudText>}</HudText>
                    <HudText $color={r.vc} $quote={r.quote} $size={r.quote ? 11 : r.big ? 10 : 9}>{r.value}</HudText>
                  </>
                )}
              </HudRow>
            ))}
          </Hud>
          <Pips>Pips +1.1</Pips>
        </Pane>
        <Scale>
          {prices.map((p, n) => <Tick key={p} y={priceY(n)}>{p}</Tick>)}
          <Tick y={456} box="#a9a9a9" ink="#101820" mark={false}>0.89883</Tick>
        </Scale>

        <Pane>
          <CciPlot />
          <PaneTitle>scMTF CCI (5,0,240,0,1) - www.truetl.com -114.40273</PaneTitle>
          <Toggles>{['RSI ON', '24 ON', '60 ON'].map((t) => <ChartButton key={t} $kind="toggle">{t}</ChartButton>)}</Toggles>
        </Pane>
        <Scale><Tick y={7} x={3} mark={false}>95.83333</Tick><Tick y={26} x={3}>0.00</Tick><Tick y={65} x={3} mark={false}>-179.16661</Tick></Scale>

        <Pane>
          <PaneTitle>H4 RSI 14.0133 14.0133</PaneTitle>
          <LevelPlot label="H4 RSI" top={640} under={rsiOneThin} over={rsiOneThick} levels={[651, 691, 731]} color="#bdb75b" width={2} />
        </Pane>
        <Scale>
          <Tick y={12} x={3} box="#bdb75b" ink="#15212d">90</Tick>
          <Tick y={7} x={3} mark={false}>100</Tick>
          <Tick y={52} x={3} box="#bdb75b" ink="#15212d">50</Tick>
          <Tick y={96} x={3} mark={false}>0</Tick>
          <Tick y={92} x={3} box="#bdb75b" ink="#15212d">10</Tick>
        </Scale>

        <Pane>
          <LevelPlot label="H4 RSI slow" top={745} under={[]} over={rsiTwo} levels={[754.5, 789.5, 825.5]} color="#24504f" width={1} />
          <PaneTitle>H4 RSI 14.0133 14.0133</PaneTitle>
        </Pane>
        <Scale>
          <Tick y={7} x={3} mark={false}>100</Tick><Tick y={10} x={3}>90</Tick><Tick y={45} x={3}>50</Tick><Tick y={81} x={3}>10</Tick><Tick y={85} x={3} mark={false}>0</Tick>
        </Scale>

        <TimeAxis>{times.map((t) => <TimeCell key={t}>{t}</TimeCell>)}</TimeAxis>
      </Workspace>

      <Tabs>
        <Tab $w={93}>EURNZD,M15</Tab>
        <Tab $w={89} $on>AUDCAD,M15</Tab>
        <Tab $w={78}>EURCAD,M1</Tab>
        <TabRule />
        <Tab $w={119}>AUDCAD,M1 (visual)</Tab>
        <TabRule />
        <TabArrows>
          <Ico w={5} h={7}><path d="M4 0v7L0 3.500z" fill="#888" /></Ico>
          <Ico w={5} h={7}><path d="M0 0v7l4-3.500z" fill="#888" /></Ico>
        </TabArrows>
      </Tabs>
      <Status>
        <StatusCell>For Help, press F1</StatusCell>
        <StatusCell $w={109}>Default</StatusCell>
        <StatusCell $w={101}>2022.01.21 12:00</StatusCell>
        <StatusCell $w={72}>O: 0.90033</StatusCell>
        <StatusCell $w={71}>H: 0.90063</StatusCell>
        <StatusCell $w={70}>L: 0.90026</StatusCell>
        <StatusCell $w={71}>C: 0.90048</StatusCell>
        <StatusCell $w={66}>V: 522</StatusCell>
        <StatusCell $w={122}>
          <Ico w={24} h={14}>
            {[0, 1, 2, 3, 4, 5, 6, 7].map((n) => <g key={n}><rect x={n * 3} y="0" width="2" height={10 - n} fill="#5a8a00" /><rect x={n * 3} y={11 - n} width="2" height={3 + n} fill="#084868" /></g>)}
          </Ico>
          4724/4 kb
        </StatusCell>
        <Ico w={16} h={18}><path d="M1 18L17 2M5 18L17 6M9 18l8-8M13 18l4-4" stroke="#808080" strokeWidth="1.500" /></Ico>
      </Status>

      <Dialog role="dialog" aria-label="Indicators on AUDCAD,M15">
        <TitleBar>
          <Lights><Light $c="#ff453a" aria-label="Close" /><Light $c="#646568" aria-label="Minimize" /><Light $c="#14d23c" aria-label="Zoom" /></Lights>
          Indicators on AUDCAD,M15
        </TitleBar>
        <DialogBody>
          <Tree>
            {tree.map(([name, items]) => (
              <Branch key={name}>
                <BranchRow><Expander aria-label={`Collapse ${name}`} /><Link /><ChartIcon />{name}</BranchRow>
                <Leaves>{items.map((t, n) => <Leaf key={n}><FxIcon />{t}</Leaf>)}</Leaves>
              </Branch>
            ))}
          </Tree>
          <Actions>
            <Action disabled><u>E</u>dit</Action>
            <Action disabled><u>D</u>elete</Action>
            <Action $primary><u>C</u>lose</Action>
          </Actions>
        </DialogBody>
      </Dialog>
    </Page>
  );
}
